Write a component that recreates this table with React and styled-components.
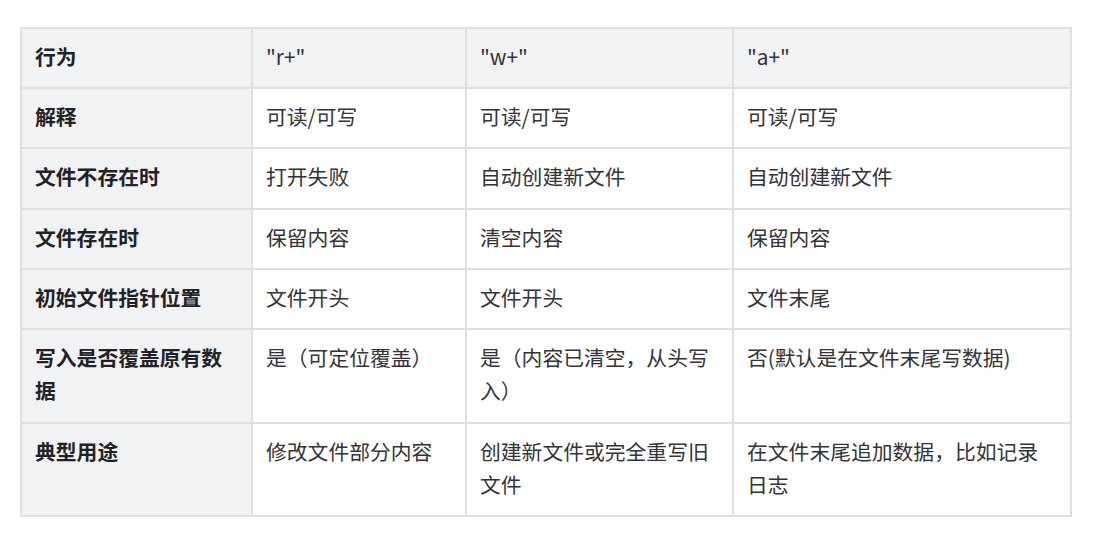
import React from "react";
import styled, { createGlobalStyle } from "styled-components";

const Global = createGlobalStyle`
  html, body { margin: 0; padding: 0; background: #ffffff; }
  body { font-family: "Noto Sans CJK SC", "Noto Sans", sans-serif; }
`;

const Page = styled.div`
  padding: 27px 28px 18px 20px;
`;

const Table = styled.table`
  width: 1050px;
  table-layout: fixed;
  border-collapse: collapse;
  border: 2px solid #dfdfe3;
  font-size: 20.8px;
  line-height: 33.4px;
  color: #333338;
`;

const Cell = styled.td`
  border: 2px solid #dfdfe3;
  padding: 11px 13px 13.8px 13px;
  vertical-align: top;
  text-align: left;
  background: ${(p) => (p.$shade ? "#f1f2f4" : "#ffffff")};
  font-weight: ${(p) => (p.$bold ? 700 : 400)};
  color: ${(p) => (p.$bold ? "#222226" : "#333338")};
`;

const header = ["行为", '"r+"', '"w+"', '"a+"'];

const rows = [
  ["解释", "可读/可写", "可读/可写", "可读/可写"],
  ["文件不存在时", "打开失败", "自动创建新文件", "自动创建新文件"],
  ["文件存在时", "保留内容", "清空内容", "保留内容"],
  ["初始文件指针位置", "文件开头", "文件开头", "文件末尾"],
  ["写入是否覆盖原有数据", "是（可定位覆盖）", "是（内容已清空，从头写入）", "否(默认是在文件末尾写数据)"],
  ["典型用途", "修改文件部分内容", "创建新文件或完全重写旧文件", "在文件末尾追加数据，比如记录日志"],
];

const widths = [231, 214, 267, 338];

export default function App() {
  return (
    <>
      <Global />
      <Page>
        <Table>
          <colgroup>
            {widths.map((w, i) => (
              <col key={i} style={{ width: w }} />
            ))}
          </colgroup>
          <thead>
            <tr>
              {header.map((h, i) => (
                <Cell as="th" key={i} $shade $bold={i === 0}>
                  {h}
                </Cell>
              ))}
            </tr>
          </thead>
          <tbody>
            {rows.map((r, ri) => (
              <tr key={ri}>
                {r.map((c, ci) => (
                  <Cell key={ci} $shade={ci === 0} $bold={ci === 0}>
                    {c}
                  </Cell>
                ))}
              </tr>
            ))}
          </tbody>
        </Table>
      </Page>
    </>
  );
}
